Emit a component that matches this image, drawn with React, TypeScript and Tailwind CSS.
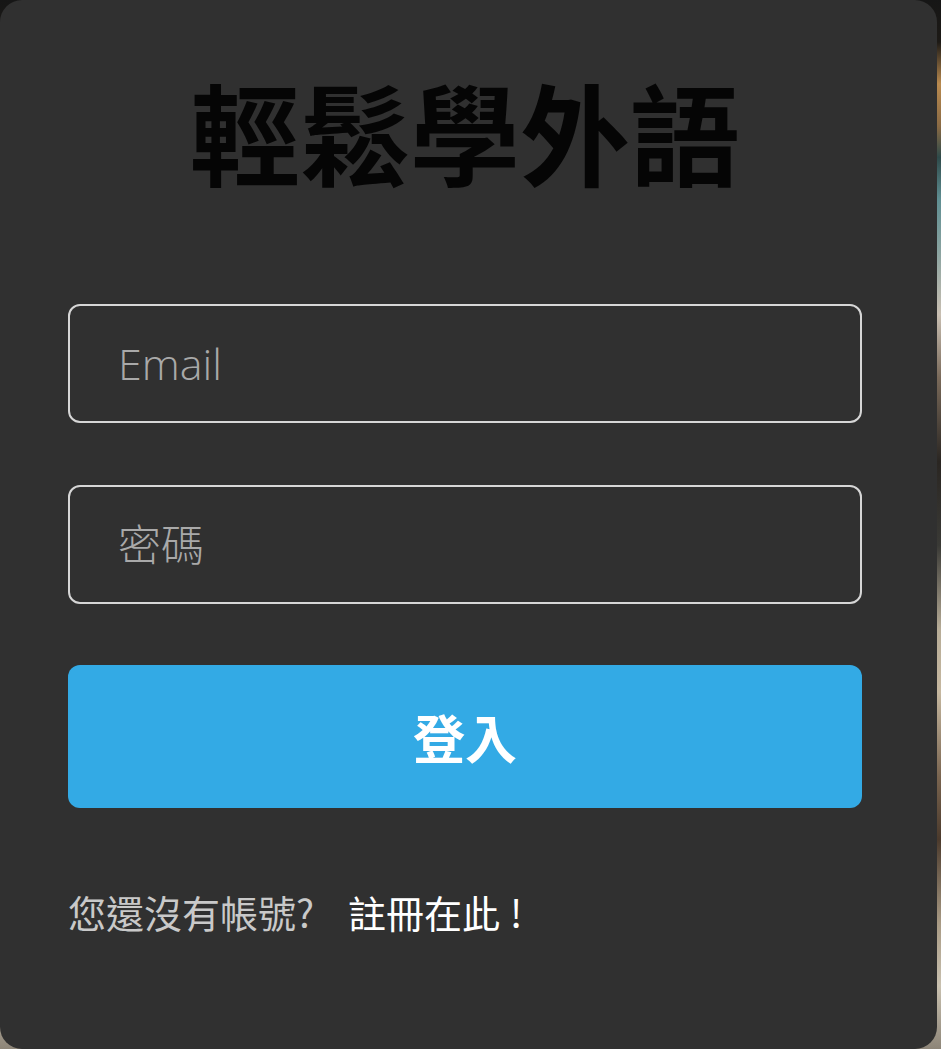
import { useState } from "react";

const cjk = { fontFamily: '"Noto Sans CJK TC", "Noto Sans", sans-serif' };
const field = { fontFamily: '"Open Sans", "Noto Sans CJK TC", sans-serif' };

export default function App() {
  const [email, setEmail] = useState("");
  const [password, setPassword] = useState("");

  return (
    <div className="flex h-[1049px] w-[941px] overflow-hidden bg-[linear-gradient(180deg,#161616_0%,#1d1a16_4%,#b98a4f_8%,#8a6a44_12%,#2e4a4a_15%,#5f8e92_19%,#8aa3a0_24%,#c9bfb2_30%,#7a6a5a_36%,#2a2622_44%,#3a3a36_52%,#b7ac97_60%,#c6b8a0_66%,#7a6550_74%,#4b3a2c_80%,#a89a84_88%,#c9c1b0_94%,#8d8578_100%)]">
      <div
        className="flex h-[1049px] w-[937px] shrink-0 flex-col rounded-[22px] bg-[#303030] pl-[68px] pr-[75px]"
        style={cjk}
      >
        <h1 className="mt-[66px] text-center text-[110px] font-bold leading-[128px] text-[#050505]">
          輕鬆學外語
        </h1>

        <form
          className="mt-[110px] flex flex-col"
          onSubmit={(e) => {
            e.preventDefault();
          }}
        >
          <input
            type="email"
            value={email}
            onChange={(e) => setEmail(e.target.value)}
            placeholder="Email"
            style={field}
            className="h-[119px] w-full rounded-[12px] border-[2.5px] border-[#d6d6d6] bg-transparent pl-[48px] text-[43px] font-light text-[#e5e5e5] outline-none placeholder:text-[#a9a9a9]"
          />
          <input
            type="password"
            value={password}
            onChange={(e) => setPassword(e.target.value)}
            placeholder="密碼"
            style={field}
            className="mt-[62px] h-[119px] w-full rounded-[12px] border-[2.5px] border-[#d6d6d6] bg-transparent pl-[48px] text-[43px] font-light text-[#e5e5e5] outline-none placeholder:text-[#a9a9a9]"
          />
          <button
            type="submit"
            className="mt-[61px] h-[143px] w-full rounded-[12px] bg-[#33aae5] text-[52px] font-bold text-white"
          >
            登入
          </button>
        </form>

        <p className="mt-[80px] flex items-center text-[38px] leading-[48px]">
          <span className="text-[#c9c9c9]">您還沒有帳號?</span>
          <a className="ml-[34px] text-white">
            註冊在此<span className="ml-[10px]">!</span>
          </a>
        </p>
      </div>
    </div>
  );
}
